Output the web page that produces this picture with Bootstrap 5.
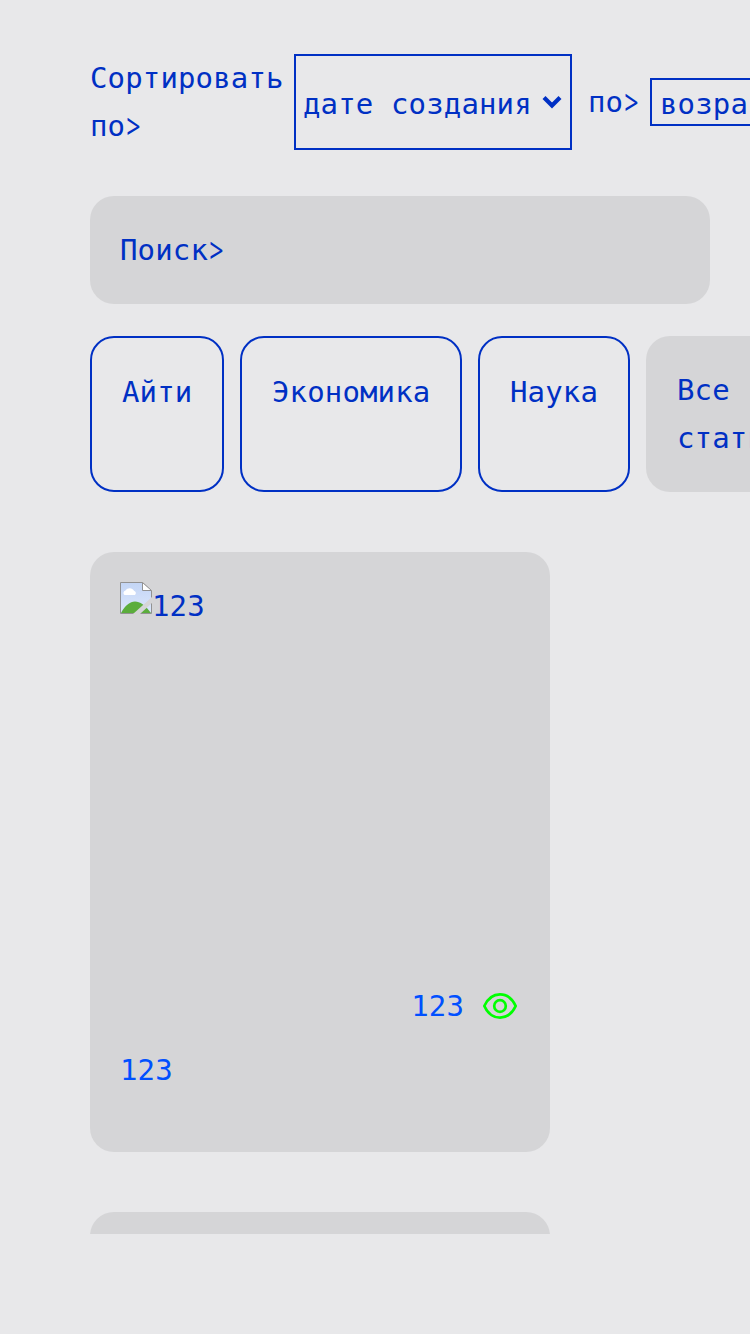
<!DOCTYPE html>
<html lang="ru">
<head>
<meta charset="utf-8">
<meta name="viewport" content="width=device-width, initial-scale=1">
<title>Статьи</title>
<link href="https://cdn.jsdelivr.net/npm/bootstrap@5.3.0/dist/css/bootstrap.min.css" rel="stylesheet">
<style>
  body { background: #e8e8ea; color: #0030c4; font: 29px/48px Consolas, "DejaVu Sans Mono", monospace; letter-spacing: .14px; overflow: hidden; }
  .page { height: 1234px; padding: 54px 0 0 90px; }
  .page > * { flex-shrink: 0; }
  .sort-row { width: 900px; height: 96px; }
  .sort-label { width: 204px; }
  .sort-to { width: 62px; }
  .prompt { display: inline-block; width: 17px; font-family: "Noto Sans", sans-serif; line-height: 1; transform: scale(.86, 1.22); }
  .sort-select { border: 2px solid #0030c4; }
  .sort-date { width: 278px; padding: 4px 8px 0 7px; }
  .sort-date svg { margin-top: -5px; }
  .sort-age { width: 200px; height: 48px; padding: 2px 8px 0; line-height: 44px; }
  .search-box { width: 620px; height: 108px; margin-top: 46px; padding: 30px; }
  .surface { background: #d5d5d7; border-radius: 24px; }
  .tags { width: 900px; height: 156px; margin-top: 32px; gap: 16px; }
  .tag-item { border: 2px solid #0030c4; border-radius: 24px; padding: 30px 0 0 30px; flex-shrink: 0; }
  .tag-it { width: 134px; } .tag-economy { width: 222px; } .tag-science { width: 152px; }
  .tag-all { width: 160px; padding: 30px 0 0 31px; }
  .article { width: 460px; height: 600px; margin-top: 60px; padding: 30px; }
  .cover { height: 400px; }
  .accent { color: #0050ff; }
  .views { padding-right: 2px; gap: 18px; }
</style>
</head>
<body>
<main class="page d-flex flex-column overflow-hidden">
  <div class="sort-row d-flex align-items-center">
    <div class="sort-label">Сортировать по<span class="prompt">&gt;</span></div>
    <div class="sort-select sort-date h-100 d-flex align-items-center justify-content-between">
      <span>дате создания</span>
      <svg width="20" height="16" viewBox="0 0 20 16" fill="none" stroke="#0030c4" stroke-width="4.2"><path d="M2 3.5l8 8 8-8"/></svg>
    </div>
    <div class="sort-to ms-3">по<span class="prompt">&gt;</span></div>
    <div class="sort-select sort-age">возрастанию</div>
  </div>
  <div class="search-box surface">Поиск<span class="prompt">&gt;</span></div>
  <nav class="tags d-flex">
    <div class="tag-item tag-it">Айти</div>
    <div class="tag-item tag-economy">Экономика</div>
    <div class="tag-item tag-science">Наука</div>
    <div class="surface tag-all flex-shrink-0">Все<br>статьи</div>
  </nav>
  <article class="article surface">
    <div class="cover d-flex align-items-start">
      <svg width="32" height="32" viewBox="0 0 32 32">
        <defs><linearGradient id="sky" x2="0" y2="1"><stop stop-color="#c3d5f5"/><stop offset="1" stop-color="#dce7fc"/></linearGradient></defs>
        <path d="M.5.5h22l9 8.500v22.500H.5z" fill="url(#sky)" stroke="#929292"/>
        <path d="M22.500.5v8h9z" fill="#fff" stroke="#929292"/>
        <path d="M4.500 13a2.500 2.500 0 0 1 1-4.500 5 5 0 0 1 8.500.2A2.500 2.500 0 0 1 15 13z" fill="#fff"/>
        <path d="M1 31C5 23.500 10 19.500 15 19.500s10 3.500 16 11.500z" fill="#5bad3c"/>
        <path d="M32 15v6L20 32h-7z" fill="#d5d5d7"/>
      </svg><span>123</span>
    </div>
    <div class="views accent d-flex align-items-center justify-content-end">
      <span>123</span>
      <svg width="36" height="36" viewBox="0 0 36 36" fill="none" stroke="#00ff00" stroke-width="2.700"><path d="M2.300 18C6 10 11.500 6.400 18 6.400S30 10 33.700 18C30 26 24.500 29.600 18 29.600S6 26 2.300 18z" stroke-linejoin="round"/><circle cx="18" cy="18" r="5.800"/></svg>
    </div>
    <div class="accent mt-3">123</div>
  </article>
  <article class="article surface"></article>
</main>
<script src="https://cdn.jsdelivr.net/npm/bootstrap@5.3.0/dist/js/bootstrap.bundle.min.js"></script>
</body>
</html>
